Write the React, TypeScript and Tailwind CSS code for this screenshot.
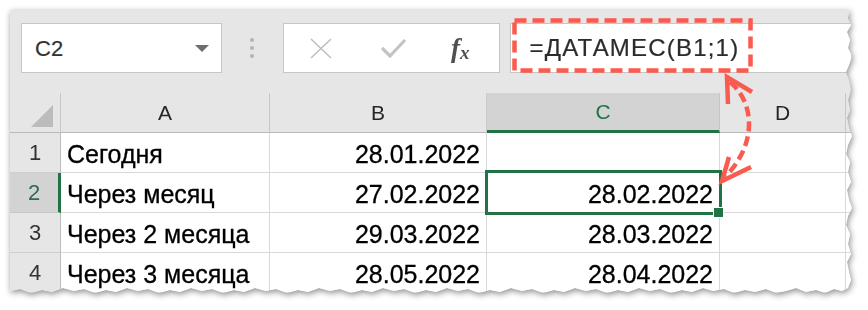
import React from 'react';

type Row = { n: number; a: string; b: string; c: string };

const rows: Row[] = [
  { n: 1, a: 'Сегодня', b: '28.01.2022', c: '' },
  { n: 2, a: 'Через месяц', b: '27.02.2022', c: '28.02.2022' },
  { n: 3, a: 'Через 2 месяца', b: '29.03.2022', c: '28.03.2022' },
  { n: 4, a: 'Через 3 месяца', b: '28.05.2022', c: '28.04.2022' },
];

// torn-paper outline of the screenshot (right + bottom edges)
const torn =
  '[clip-path:polygon(0_0,840px_0,838px_8px,841px_15px,837px_22px,840px_30px,838px_38px,842px_46px,839px_55px,836px_62px,839px_70px,841px_80px,838px_90px,840px_100px,837px_108px,839px_118px,842px_126px,838px_135px,836px_144px,840px_152px,838px_162px,841px_172px,837px_180px,839px_190px,842px_198px,838px_206px,836px_215px,840px_224px,838px_234px,841px_244px,837px_252px,839px_262px,841px_270px,838px_278px,832px_281px,824px_279px,815px_283px,806px_280px,796px_282px,786px_278px,776px_281px,766px_283px,756px_279px,745px_282px,735px_280px,724px_283px,714px_279px,703px_281px,693px_278px,682px_282px,672px_280px,661px_283px,650px_279px,640px_281px,629px_278px,618px_282px,608px_280px,597px_283px,586px_279px,576px_281px,565px_278px,554px_282px,544px_280px,533px_283px,522px_279px,512px_281px,501px_278px,490px_282px,480px_280px,469px_283px,458px_279px,448px_281px,437px_278px,426px_282px,416px_280px,405px_283px,394px_279px,384px_281px,373px_278px,362px_282px,352px_280px,341px_283px,330px_279px,320px_281px,309px_278px,298px_282px,288px_280px,277px_283px,266px_279px,256px_281px,245px_278px,234px_282px,224px_280px,213px_283px,202px_279px,192px_281px,181px_278px,170px_282px,160px_280px,149px_283px,138px_279px,128px_281px,117px_278px,106px_282px,96px_280px,85px_283px,74px_279px,64px_281px,53px_278px,42px_282px,32px_280px,21px_283px,10px_279px,0_281px)]';

function NameBox() {
  return (
    <div className="w-[202px] h-[50px] bg-white border border-[#c6c6c6] flex items-center justify-between pl-[13px] pr-[12px]">
      <span className="text-[22px] text-[#333] font-['Liberation_Sans',sans-serif] [-webkit-text-stroke:0.2px_#333]">C2</span>
      <svg width="14" height="7" viewBox="0 0 14 7">
        <path d="M0 0 L14 0 L7 7 Z" fill="#6e6e6e" />
      </svg>
    </div>
  );
}

function Dots() {
  return (
    <div className="w-[62px] h-[50px] flex flex-col items-center justify-center gap-[4px]">
      <span className="w-[4px] h-[4px] rounded-full bg-[#b4b4b4]" />
      <span className="w-[4px] h-[4px] rounded-full bg-[#b4b4b4]" />
      <span className="w-[4px] h-[4px] rounded-full bg-[#b4b4b4]" />
    </div>
  );
}

function ButtonsBox() {
  return (
    <div className="w-[218px] h-[50px] bg-white border border-[#c6c6c6] flex items-center pl-[26px]">
      <svg width="22" height="21" viewBox="0 0 22 21">
        <path d="M1 1 L21 20 M21 1 L1 20" stroke="#bfbfbf" strokeWidth="1.6" />
      </svg>
      <svg width="27" height="22" viewBox="0 0 27 22" className="ml-[48px]">
        <path d="M2 11 L10 19 L25 3" stroke="#c4c4c4" strokeWidth="3.2" fill="none" />
      </svg>
      <span className="ml-[44px] font-['Liberation_Serif',serif] italic font-bold text-[#505050] leading-none flex items-baseline">
        <span className="text-[27px]">f</span>
        <span className="text-[19px] translate-y-[2px]">x</span>
      </span>
    </div>
  );
}

function FormulaBox() {
  return (
    <div className="ml-[10px] w-[345px] h-[50px] bg-white border border-[#c6c6c6] flex items-center pl-[19px]">
      <span className="text-[24px] tracking-[1.2px] text-[#2b2b2b] font-['Liberation_Sans',sans-serif] whitespace-nowrap [-webkit-text-stroke:0.2px_#2b2b2b]">
        =ДАТАМЕС(B1;1)
      </span>
    </div>
  );
}

function ColHeader({ label, selected }: { label: string; selected?: boolean }) {
  return (
    <div
      className={
        selected
          ? 'h-[40px] bg-[#d3d3d3] border-r border-r-[#c4c4c4] border-b-[3px] border-b-[#217346] flex items-center justify-center text-[21px] text-[#217346]'
          : 'h-[40px] bg-[#e6e6e6] border-r border-r-[#c8c8c8] border-b border-b-[#b9b9b9] flex items-center justify-center text-[21px] text-[#262626]'
      }
    >
      {label}
    </div>
  );
}

function RowHeader({ n, selected }: { n: number; selected?: boolean }) {
  return (
    <div
      className={
        selected
          ? 'h-[40px] bg-[#d3d3d3] border-r-[3px] border-r-[#217346] border-b border-b-[#c8c8c8] flex items-center justify-center text-[22px] text-[#2c6b50]'
          : 'h-[40px] bg-[#e6e6e6] border-r border-r-[#bdbdbd] border-b border-b-[#cfcfcf] flex items-center justify-center text-[22px] text-[#333]'
      }
    >
      {n}
    </div>
  );
}

function Cell({ text, right }: { text?: string; right?: boolean }) {
  return (
    <div
      className={
        right
          ? 'h-[40px] bg-white border-r border-b border-[#d9d9d9] flex items-center justify-end pr-[6px] pt-[4px] text-[25px] text-black whitespace-nowrap overflow-hidden [-webkit-text-stroke:0.3px_black]'
          : 'h-[40px] bg-white border-r border-b border-[#d9d9d9] flex items-center pl-[6px] pt-[4px] text-[25px] text-black whitespace-nowrap overflow-hidden [-webkit-text-stroke:0.3px_black]'
      }
    >
      {text}
    </div>
  );
}

function Sheet() {
  return (
    <div className="grid grid-cols-[51px_209px_217px_233px_126px_100px] font-['Liberation_Sans',sans-serif]">
      <div className="h-[40px] bg-[#e6e6e6] border-r border-r-[#c8c8c8] border-b border-b-[#b9b9b9] flex items-end justify-end pr-[7px] pb-[5px]">
        <svg width="22" height="22" viewBox="0 0 22 22">
          <path d="M22 0 L22 22 L0 22 Z" fill="#bcbcbc" />
        </svg>
      </div>
      <ColHeader label="A" />
      <ColHeader label="B" />
      <ColHeader label="C" selected />
      <ColHeader label="D" />
      <ColHeader label="" />
      {rows.map((r) => (
        <React.Fragment key={r.n}>
          <RowHeader n={r.n} selected={r.n === 2} />
          <Cell text={r.a} />
          <Cell text={r.b} right />
          <Cell text={r.c} right />
          <Cell />
          <Cell />
        </React.Fragment>
      ))}
    </div>
  );
}

export default function App() {
  return (
    <div className="w-[868px] h-[310px] bg-white relative overflow-hidden pl-[10px] pt-[10px]">
      <div className="[filter:drop-shadow(1px_2px_3px_rgba(0,0,0,0.45))]">
        <div className={`w-[842px] h-[284px] bg-[#e6e6e6] relative overflow-hidden ${torn}`}>
          <div className="h-[83px] flex items-start pt-[13px] pl-[11px]">
            <NameBox />
            <Dots />
            <ButtonsBox />
            <FormulaBox />
          </div>
          <Sheet />

          {/* active cell C2 */}
          <div className="absolute left-[475px] top-[160px] w-[237px] h-[45px] border-[3px] border-[#217346]" />
          <div className="absolute left-[703px] top-[197px] w-[11px] h-[11px] bg-[#217346] border border-white" />
        </div>
      </div>

      {/* callout: dashed frame + double arrow */}
      <svg className="absolute left-0 top-0 pointer-events-none" width="868" height="310" viewBox="0 0 868 310">
        <rect x="514.5" y="20.5" width="236" height="50" fill="none" stroke="#fb5a4e" strokeWidth="4.5" strokeDasharray="12 6" />
        <path d="M730 82 C752 100 760 140 726 176" fill="none" stroke="#fb5a4e" strokeWidth="4.5" strokeDasharray="10 5" />
        <polyline points="728,104 727,77 752,92" fill="none" stroke="#fb5a4e" strokeWidth="4.5" />
        <polyline points="729,157 722,181 751,167" fill="none" stroke="#fb5a4e" strokeWidth="4.5" />
      </svg>
    </div>
  );
}
